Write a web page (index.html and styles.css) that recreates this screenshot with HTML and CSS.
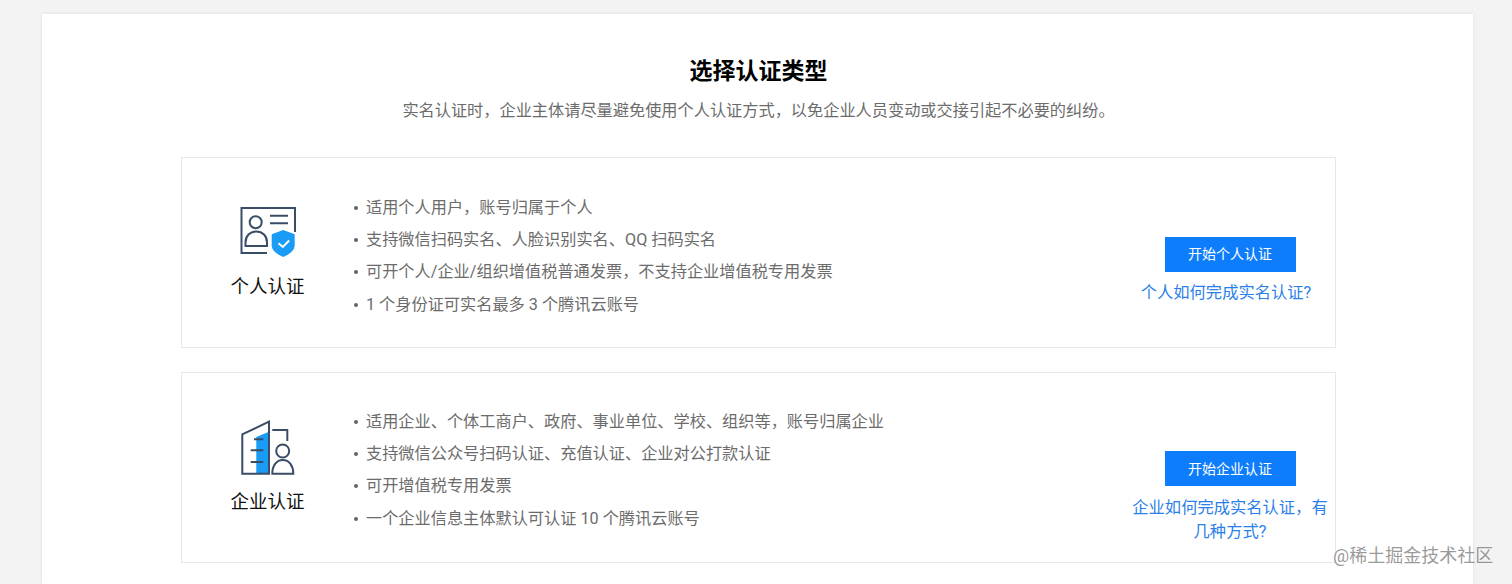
FILE: index.html
```html
<!DOCTYPE html>
<html lang="zh-CN">
<head>
    <meta charset="UTF-8">
    <meta name="viewport" content="width=device-width, initial-scale=1.0">
    <title>选择认证类型</title>
    <link rel="stylesheet" href="styles.css">
</head>
<body>
    <div class="panel">
        <h1 class="title">选择认证类型</h1>
        <p class="subtitle">实名认证时，企业主体请尽量避免使用个人认证方式，以免企业人员变动或交接引起不必要的纠纷。</p>

        <!-- Personal -->
        <div class="auth-card">
            <div class="auth-type">
                <svg class="auth-icon" viewBox="0 0 60 60" width="60" height="60" fill="none">
                    <path class="line" d="M28 48H2.500V3H56V27"/>
                    <circle class="line" cx="16.700" cy="17.300" r="6"/>
                    <path class="line" d="M6.500 41v-3.500c0-6.500 4.500-11 10.800-11s10.700 4.500 10.700 11V41z"/>
                    <path class="line" d="M31 10.700h18M31 18.300h18"/>
                    <path class="fill" d="M44.200 25l11.500 4.300v11c0 5-5 9-11.500 11.700-6.500-2.700-11.500-6.700-11.500-11.700v-11z"/>
                    <path class="check" d="M39.500 38.300l4.300 3.600 6.400-6.400"/>
                </svg>
                <div class="auth-name">个人认证</div>
            </div>
            <ul class="auth-list">
                <li>适用个人用户，账号归属于个人</li>
                <li>支持微信扫码实名、人脸识别实名、QQ 扫码实名</li>
                <li>可开个人/企业/组织增值税普通发票，不支持企业增值税专用发票</li>
                <li>1 个身份证可实名最多 3 个腾讯云账号</li>
            </ul>
            <div class="auth-action">
                <button class="start-btn">开始个人认证</button>
                <a class="help-link help-link-short" href="#">个人如何完成实名认证?</a>
            </div>
        </div>

        <!-- Enterprise -->
        <div class="auth-card auth-card-company">
            <div class="auth-type">
                <svg class="auth-icon" viewBox="0 0 60 60" width="60" height="60" fill="none">
                    <path class="fill" d="M17.300 54.700V18L30 12.700v42z"/>
                    <path class="line" d="M3.300 54.700V15.300L30 2.700v52z"/>
                    <path class="line" d="M15 20.300h9.300M11.700 31.300h12.600M11.700 43h12.600"/>
                    <path class="line" d="M33.300 11h15v11"/>
                    <circle class="line" cx="43.700" cy="32" r="6.500"/>
                    <path class="line" d="M33.300 54.700c0-8 4-13.700 10.500-13.700s10.500 5.700 10.500 13.700z"/>
                </svg>
                <div class="auth-name">企业认证</div>
            </div>
            <ul class="auth-list">
                <li>适用企业、个体工商户、政府、事业单位、学校、组织等，账号归属企业</li>
                <li>支持微信公众号扫码认证、充值认证、企业对公打款认证</li>
                <li>可开增值税专用发票</li>
                <li>一个企业信息主体默认可认证 10 个腾讯云账号</li>
            </ul>
            <div class="auth-action">
                <button class="start-btn">开始企业认证</button>
                <a class="help-link" href="#">企业如何完成实名认证，有几种方式?</a>
            </div>
        </div>
    </div>

    <div class="watermark">@稀土掘金技术社区</div>
</body>
</html>
```

FILE: styles.css
```css
* {
    margin: 0;
    padding: 0;
    box-sizing: border-box;
    font-family: Roboto, "Noto Sans CJK SC", sans-serif;
}

html, body {
    height: 584px;
    overflow: hidden;
}

body {
    background-color: #f3f3f3;
    padding: 14px 39px 0 42px;
}

.panel {
    background-color: #fff;
    height: 570px;
    padding: 41px 137px 0 139px;
    box-shadow: 0 0 4px rgba(0,0,0,0.08);
}

.title {
    color: #000;
    font-size: 23px;
    font-weight: bold;
    line-height: 34px;
    text-align: center;
}

.subtitle {
    color: #6c6c6c;
    font-size: 16.2px;
    line-height: 24px;
    margin-top: 10px;
    text-align: center;
}

.auth-card {
    display: flex;
    align-items: stretch;
    height: 191px;
    margin-top: 34px;
    border: 1px solid #e8e8e8;
}

.auth-type {
    width: 171px;
    display: flex;
    flex-direction: column;
    align-items: center;
    padding-top: 47px;
    flex-shrink: 0;
}

.auth-icon {
    display: block;
    margin-left: 3px;
}

.auth-name {
    color: #111;
    font-size: 18.5px;
    line-height: 26px;
    margin-top: 9px;
}

.auth-list {
    list-style: none;
    flex: 1;
    padding-top: 34px;
}

.auth-list li {
    color: #6c6c6c;
    font-size: 16.2px;
    line-height: 32.2px;
    padding-left: 13px;
    position: relative;
}

.auth-list li::before {
    content: "";
    position: absolute;
    left: 1px;
    top: 14px;
    width: 4px;
    height: 4px;
    border-radius: 50%;
    background-color: #666;
}

.auth-action {
    width: 208px;
    display: flex;
    flex-direction: column;
    align-items: center;
    padding: 79px 2px 0 0;
    flex-shrink: 0;
}

.start-btn {
    width: 131px;
    height: 35px;
    padding-bottom: 3px;
    background-color: #0d7dfb;
    color: #fff;
    border: none;
    font-size: 14px;
}

.help-link {
    color: #2b7fe8;
    font-size: 16.3px;
    line-height: 24px;
    margin-top: 9px;
    text-align: center;
    text-decoration: none;
}

.help-link-short {
    margin-right: 8px;
}

/* second card sits a pixel tighter than the first */
.auth-card-company {
    margin-top: 24px;
}

.auth-card-company .auth-type {
    padding-top: 46px;
}

.auth-card-company .auth-name {
    margin-top: 10px;
}

.auth-card-company .auth-list {
    padding-top: 33px;
}

.auth-card-company .auth-action {
    padding-top: 78px;
}

.auth-card-company .start-btn {
    padding-bottom: 2px;
}

.auth-card-company .help-link {
    margin-top: 10px;
}

.line {
    stroke: #3a4d66;
    stroke-width: 2;
}

.fill {
    fill: #1a9bf5;
}

.check {
    stroke: #fff;
    stroke-width: 2;
}

.watermark {
    position: absolute;
    left: 1333px;
    top: 543px;
    color: rgba(120,120,120,0.75);
    font-size: 18px;
    line-height: 26px;
    white-space: nowrap;
}
```
